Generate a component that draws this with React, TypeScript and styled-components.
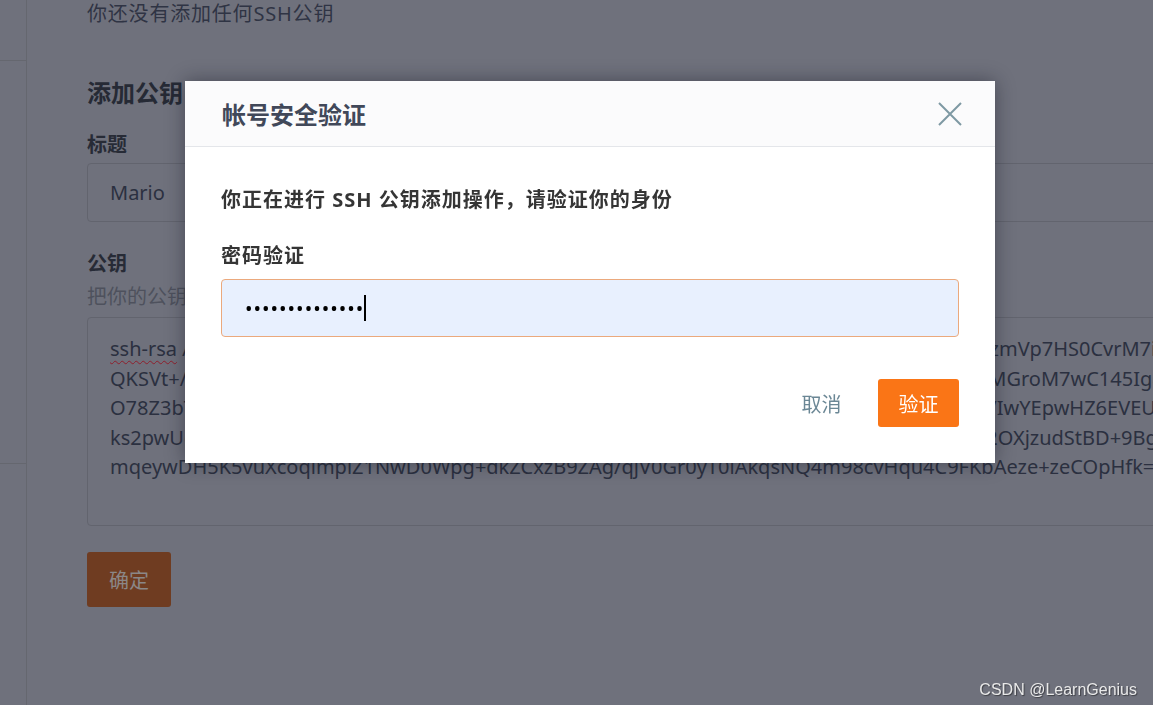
import React from "react";
import styled, { createGlobalStyle } from "styled-components";

const GlobalStyle = createGlobalStyle`
  html, body { margin: 0; padding: 0; height: 100%; overflow: hidden; }
  body {
    background: #6f717c;
    font-family: "Noto Sans", "Noto Sans CJK SC", sans-serif;
  }
  * { box-sizing: border-box; }
`;

const Page = styled.div`
  display: flex;
  height: 705px;
  overflow: hidden;
`;

const Sidebar = styled.aside`
  width: 27px;
  flex-shrink: 0;
  border-right: 1px solid #65676f;
  display: flex;
  flex-direction: column;
`;

const SideBlock = styled.div<{ $h: number }>`
  height: ${(p) => p.$h}px;
  border-bottom: 1px solid #65676f;
`;

const Main = styled.main`
  flex: 1;
  min-width: 0;
  padding-left: 60px;
  display: flex;
  flex-direction: column;
  align-items: flex-start;
`;

const EmptyNote = styled.p`
  margin: 0;
  font-size: 20px;
  line-height: 28px;
  letter-spacing: 0.8px;
  color: #2f3444;
`;

const SectionTitle = styled.h2`
  margin: 49px 0 0;
  font-size: 24px;
  line-height: 32px;
  font-weight: 700;
  color: #262a35;
`;

const FieldLabel = styled.label<{ $gap: number }>`
  display: block;
  margin-top: ${(p) => p.$gap}px;
  font-size: 20px;
  line-height: 28px;
  font-weight: 700;
  color: #272b36;
`;

const TitleInput = styled.input`
  margin-top: 4px;
  width: 1200px;
  height: 59px;
  border: 1px solid #62646e;
  border-radius: 4px;
  padding: 0 22px;
  background: transparent;
  font: inherit;
  font-size: 20px;
  color: #2b3040;
  outline: none;
`;

const Hint = styled.p`
  margin: 5px 0 0;
  font-size: 20px;
  line-height: 28px;
  color: #4e515d;
`;

const KeyBox = styled.div`
  margin-top: 6px;
  width: 1200px;
  height: 209px;
  border: 1px solid #62646e;
  border-radius: 4px;
  padding: 16px 22px;
  font-size: 20px;
  line-height: 29.5px;
  color: #2b3040;
  overflow: hidden;
`;

const KeyLine = styled.div`
  white-space: nowrap;
`;

const Misspelled = styled.span`
  text-decoration: underline wavy #8e1f2c;
  text-decoration-thickness: 1px;
  text-underline-offset: 4px;
`;

const ConfirmButton = styled.button`
  margin-top: 26px;
  width: 84px;
  height: 55px;
  border: none;
  border-radius: 3px;
  background: #6f3c21;
  color: #8b8787;
  font: inherit;
  font-size: 20px;
`;

const Overlay = styled.div`
  position: fixed;
  inset: 0;
  padding: 81px 0 0 185px;
`;

const Dialog = styled.div`
  width: 810px;
  background: #ffffff;
  box-shadow: 0 0 18px rgba(20, 22, 35, 0.45);
`;

const DialogHeader = styled.header`
  height: 66px;
  background: #fbfbfc;
  border-bottom: 1px solid #e4e6ea;
  display: flex;
  align-items: center;
  justify-content: space-between;
  padding: 0 33px 0 37px;
`;

const DialogTitle = styled.h3`
  margin: 0;
  font-size: 24px;
  font-weight: 700;
  color: #414859;
`;

const CloseButton = styled.button`
  width: 24px;
  height: 24px;
  padding: 0;
  border: none;
  background: none;
  display: flex;
`;

const DialogBody = styled.div`
  padding: 39px 36px 36px;
  display: flex;
  flex-direction: column;
`;

const Lead = styled.p`
  margin: 0;
  font-size: 20px;
  line-height: 28px;
  font-weight: 700;
  letter-spacing: 1px;
  color: #353535;
`;

const PwdLabel = styled.label`
  margin-top: 28px;
  font-size: 20px;
  line-height: 28px;
  font-weight: 700;
  letter-spacing: 1px;
  color: #353535;
`;

const PwdField = styled.div`
  margin-top: 9px;
  height: 58px;
  background: #e8f0fe;
  border: 1px solid #eba97d;
  border-radius: 4px;
  padding-left: 23px;
  display: flex;
  align-items: center;
`;

const Dots = styled.span`
  font-size: 20px;
  letter-spacing: 1px;
  color: #000;
`;

const Caret = styled.span`
  width: 2px;
  height: 26px;
  background: #000;
`;

const Footer = styled.div`
  margin-top: 42px;
  display: flex;
  justify-content: flex-end;
  gap: 16px;
`;

const DialogButton = styled.button<{ $primary?: boolean }>`
  height: 48px;
  min-width: 81px;
  padding: 0 20px;
  border: none;
  border-radius: 3px;
  font: inherit;
  font-size: 20px;
  background: ${(p) => (p.$primary ? "#fa7516" : "transparent")};
  color: ${(p) => (p.$primary ? "#ffffff" : "#6b8795")};
`;

const Watermark = styled.div`
  position: fixed;
  right: 16px;
  bottom: 6px;
  font-family: "Liberation Sans", Arial, sans-serif;
  font-size: 16px;
  color: #e9e9e9;
  text-shadow: 1px 1px 1px rgba(0, 0, 0, 0.45);
`;

const lines = [
  "AAAAB3NzaC1yc2EAAAADAQABAAABgQC5xTq8rWmB2vLkY9oHd3sNfP7aZc4JuEiG1tRyzmVp7HS0CvrM7iQ2kLwB8nTd",
  "QKSVt+/aJ3nW8dLq5YxB0cRm7vTz2HkPs9EuF4gNb6oXiCjA1wZlUy3Kr8DtMeVh5qGp0nSfOaLdMGroM7wC145Ig8sLx",
  "O78Z3bT1kPqW9rXn4LyV6dHc0sMjE2uFzGa8oBtN5wKiC3lRpY7eJvS1xQhD9mUgA4fZcWb6nTk/IwYEpwHZ6EVEUr3Kd",
  "ks2pwUcH8rLm3TqY5vNx0bWd7KjF2sEzP9aGh4uRc1oMiV6yBtXl8nQe3wDfS0pJk5ZgC7rHzcAb2OXjzudStBD+9Bgk2Ws",
  "mqeywDH5K5vuXcoqlmpiZ1NwD0Wpg+dkZCxzB9ZAg/qjV0Gr0yT0lAkqsNQ4m98cvHqu4C9FKbAeze+zeCOpHfk=",
];

export default function App() {
  return (
    <>
      <GlobalStyle />
      <Page>
        <Sidebar>
          <SideBlock $h={61} />
          <SideBlock $h={403} />
        </Sidebar>
        <Main>
          <EmptyNote>你还没有添加任何SSH公钥</EmptyNote>
          <SectionTitle>添加公钥</SectionTitle>
          <FieldLabel $gap={22}>标题</FieldLabel>
          <TitleInput value="Mario" readOnly />
          <FieldLabel $gap={28}>公钥</FieldLabel>
          <Hint>把你的公钥粘贴到这里，公钥通常以 ssh-rsa 开头</Hint>
          <KeyBox role="textbox">
            <KeyLine>
              <Misspelled>ssh-rsa</Misspelled> {lines[0]}
            </KeyLine>
            {lines.slice(1).map((l) => (
              <KeyLine key={l}>{l}</KeyLine>
            ))}
          </KeyBox>
          <ConfirmButton>确定</ConfirmButton>
        </Main>
      </Page>
      <Overlay>
        <Dialog role="dialog">
          <DialogHeader>
            <DialogTitle>帐号安全验证</DialogTitle>
            <CloseButton aria-label="关闭">
              <svg width="24" height="24" viewBox="0 0 24 24">
                <path d="M1 1 L23 23 M23 1 L1 23" stroke="#7e99a3" strokeWidth="2" fill="none" />
              </svg>
            </CloseButton>
          </DialogHeader>
          <DialogBody>
            <Lead>你正在进行 SSH 公钥添加操作，请验证你的身份</Lead>
            <PwdLabel>密码验证</PwdLabel>
            <PwdField>
              <Dots>••••••••••••••</Dots>
              <Caret />
            </PwdField>
            <Footer>
              <DialogButton>取消</DialogButton>
              <DialogButton $primary>验证</DialogButton>
            </Footer>
          </DialogBody>
        </Dialog>
      </Overlay>
      <Watermark>CSDN @LearnGenius</Watermark>
    </>
  );
}
